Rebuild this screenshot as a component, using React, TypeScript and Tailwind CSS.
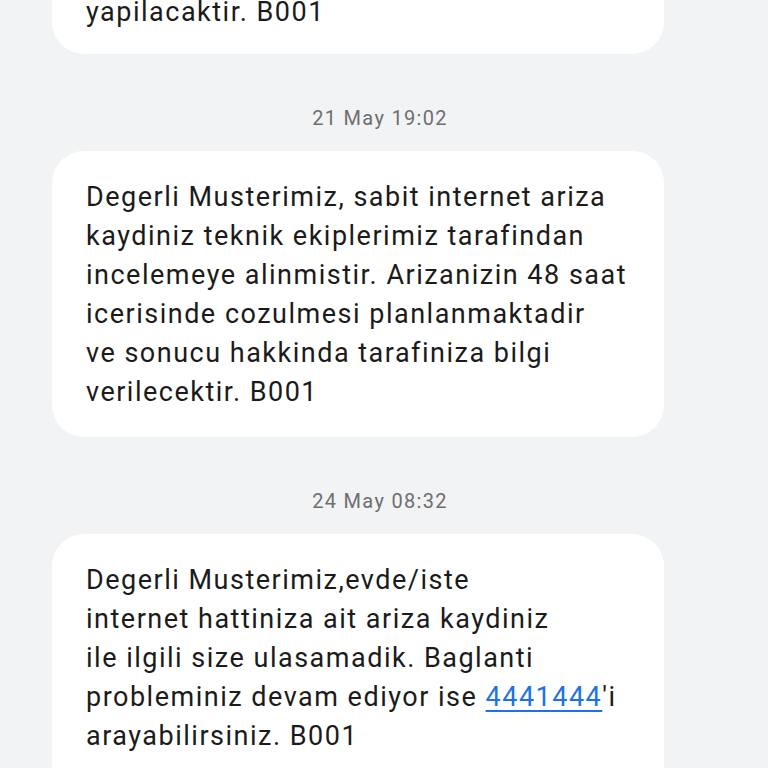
const bubbleText = 'text-[27px] leading-[39px] tracking-[1.5px] text-[#1b1b1b] whitespace-nowrap'

function Stamp({ label }: { label: string }) {
  return (
    <div className="-ml-[52px] w-[760px] mt-[50px] mb-[19px] h-[28px] flex items-center justify-center text-[20px] tracking-[1.3px] text-[#6e6e70]">
      {label}
    </div>
  )
}

function Bubble({ lines, pb = 'pb-[25px]' }: { lines: React.ReactNode[]; pb?: string }) {
  return (
    <div className={`w-[612px] bg-white rounded-[32px] pl-[34px] pr-4 pt-[27px] ${pb}`}>
      <div className={bubbleText}>
        {lines.map((l, i) => (
          <div key={i}>{l}</div>
        ))}
      </div>
    </div>
  )
}

export default function App() {
  return (
    <div
      className="h-[768px] w-[768px] overflow-hidden bg-[#f2f3f5]"
      style={{ fontFamily: 'Roboto, "Noto Sans", sans-serif' }}
    >
      <div className="pl-[52px] -mt-[34px]">
        {/* earlier message, only its last line is on screen */}
        <Bubble lines={['yapilacaktir. B001']} pb="pb-[22px]" />
        <Stamp label="21 May 19:02" />
        <Bubble
          lines={[
            'Degerli Musterimiz, sabit internet ariza',
            'kaydiniz teknik ekiplerimiz tarafindan',
            'incelemeye alinmistir. Arizanizin 48 saat',
            'icerisinde cozulmesi planlanmaktadir',
            've sonucu hakkinda tarafiniza bilgi',
            'verilecektir. B001',
          ]}
        />
        <Stamp label="24 May 08:32" />
        <Bubble
          pb="pb-[40px]"
          lines={[
            'Degerli Musterimiz,evde/iste',
            'internet hattiniza ait ariza kaydiniz',
            'ile ilgili size ulasamadik. Baglanti',
            <>
              probleminiz devam ediyor ise{' '}
              <span className="text-[#1a73e8] underline decoration-2 underline-offset-[4px]">4441444</span>'i
            </>,
            'arayabilirsiniz. B001',
          ]}
        />
      </div>
    </div>
  )
}
